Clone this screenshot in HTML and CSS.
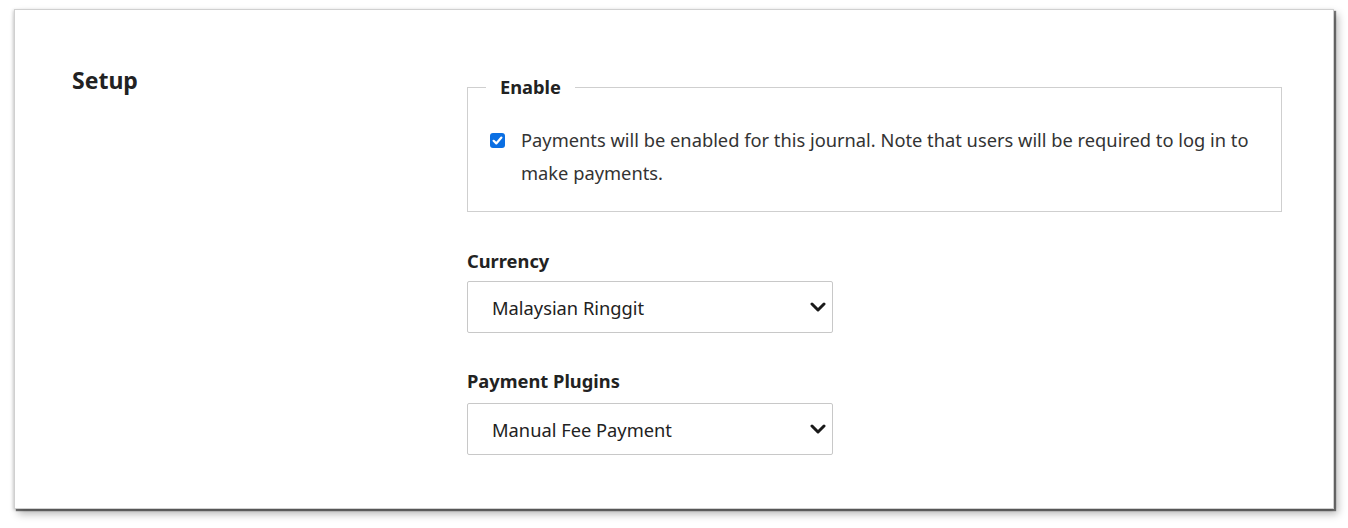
FILE: index.html
```html
<!DOCTYPE html>
<html lang="en">
<head>
<meta charset="utf-8">
<title>Setup</title>
<link rel="stylesheet" href="styles.css">
</head>
<body>
<div class="card">
  <div class="section">
    <h2 class="section-title">Setup</h2>
    <div class="fields">
      <fieldset class="options">
        <legend class="options-legend">Enable</legend>
        <label class="option">
          <span class="checkbox" aria-hidden="true">
            <svg width="15" height="15" viewBox="0 0 15 15"><path d="M3.6 7.8 L6.3 10.4 L11.4 4.6" fill="none" stroke="#fff" stroke-width="2.2" stroke-linecap="round" stroke-linejoin="round"/></svg>
          </span>
          <span class="option-text">Payments will be enabled for this journal. Note that users will be required to log in to make payments.</span>
        </label>
      </fieldset>

      <div class="field">
        <label class="field-label" for="currency">Currency</label>
        <div class="select-wrap">
          <select id="currency" class="select"><option>Malaysian Ringgit</option></select>
          <svg class="chevron" width="16" height="10" viewBox="0 0 16 10"><path d="M2 2 L8 8 L14 2" fill="none" stroke="#1a1a1a" stroke-width="3" stroke-linecap="round" stroke-linejoin="round"/></svg>
        </div>
      </div>

      <div class="field">
        <label class="field-label" for="plugins">Payment Plugins</label>
        <div class="select-wrap">
          <select id="plugins" class="select"><option>Manual Fee Payment</option></select>
          <svg class="chevron" width="16" height="10" viewBox="0 0 16 10"><path d="M2 2 L8 8 L14 2" fill="none" stroke="#1a1a1a" stroke-width="3" stroke-linecap="round" stroke-linejoin="round"/></svg>
        </div>
      </div>
    </div>
  </div>
</div>
</body>
</html>
```

FILE: styles.css
```css
* { box-sizing: border-box; }

html, body {
  margin: 0;
  padding: 0;
  background: #ffffff;
}

body {
  font-family: "Noto Sans", "Open Sans", sans-serif;
  color: #222222;
  min-height: 528px;
  padding: 9px 0 19px 14px;
}

.card {
  width: 1320px;
  height: 500px;
  background: #ffffff;
  border: 1px solid #d0d0d0;
  box-shadow: 2px 2px 1px rgba(0, 0, 0, 0.5), 4px 5px 8px rgba(0, 0, 0, 0.28), -1px 1px 3px rgba(0, 0, 0, 0.18);
  padding: 55px 0 0 57px;
}

.section {
  display: grid;
  grid-template-columns: 395px 815px;
  align-items: start;
}

.section-title {
  margin: 0;
  font-size: 23px;
  line-height: 30px;
  font-weight: 700;
  color: #222;
}

.fields {
  margin-top: 11px;
}

.options {
  margin: 0;
  border: 1px solid #cfcfcf;
  padding: 25px 22px 22px 22px;
  min-width: 0;
}

.options-legend {
  margin-left: -4px;
  padding: 0 14px;
  font-size: 18.3px;
  line-height: 22px;
  font-weight: 700;
  color: #222;
}

.option {
  display: flex;
  align-items: flex-start;
  gap: 16px;
  cursor: pointer;
}

.checkbox {
  flex: none;
  width: 15px;
  height: 15px;
  margin-top: 9.5px;
  border-radius: 3px;
  background: #0b6fe3;
  display: flex;
}

.option-text {
  font-size: 18.3px;
  line-height: 33px;
  color: #333;
}

.field {
  margin-top: 37px;
}

.field + .field {
  margin-top: 36px;
}

.field-label {
  display: block;
  font-size: 18.3px;
  line-height: 24px;
  font-weight: 700;
  color: #222;
  margin-bottom: 8px;
}

.field + .field .field-label {
  margin-bottom: 10px;
}

.select-wrap {
  position: relative;
  width: 366px;
}

.select {
  appearance: none;
  -webkit-appearance: none;
  display: block;
  width: 366px;
  height: 52px;
  margin: 0;
  border: 1px solid #c8c8c8;
  border-radius: 2px;
  background: #fff;
  padding: 0 40px 0 24px;
  font-family: "Noto Sans", "Open Sans", sans-serif;
  font-size: 18.3px;
  color: #222;
}

.chevron {
  position: absolute;
  right: 7px;
  top: 21px;
  pointer-events: none;
}
```
